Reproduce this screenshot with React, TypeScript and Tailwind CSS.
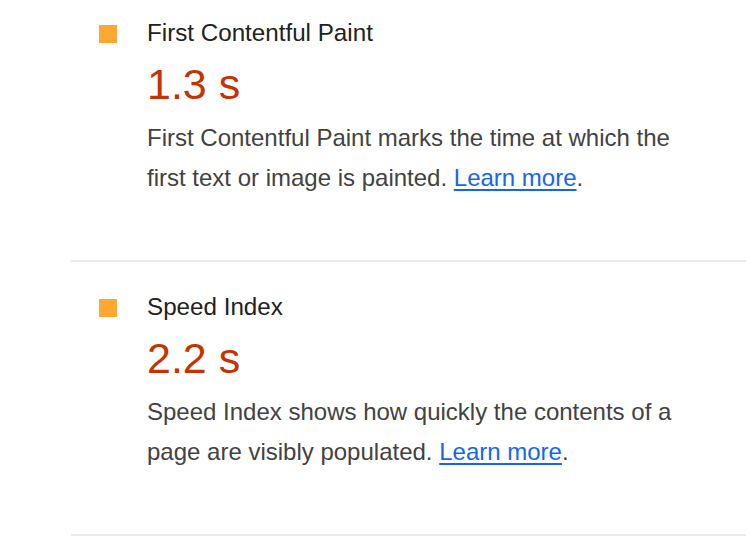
import React from 'react';

interface Metric {
  title: string;
  value: string;
  description: string;
}

const metrics: Metric[] = [
  {
    title: 'First Contentful Paint',
    value: '1.3 s',
    description: 'First Contentful Paint marks the time at which the first text or image is painted.',
  },
  {
    title: 'Speed Index',
    value: '2.2 s',
    description: 'Speed Index shows how quickly the contents of a page are visibly populated.',
  },
];

function MetricRow({ metric, first }: { metric: Metric; first: boolean }) {
  return (
    <div className={`flex border-b-2 border-[#ebebeb] pl-[28px] pb-[62px] ${first ? 'pt-[17px]' : 'pt-[29px]'}`}>
      {/* average score marker */}
      <div className="mt-[8px] h-[18px] w-[18px] shrink-0 bg-[#ffa733]" />
      <div className="ml-[30px] flex flex-col">
        <div className="text-[24.2px] leading-[32px] text-[#212121]">{metric.title}</div>
        <div className="mt-[9px] text-[43px] leading-[52px] text-[#c53300]">{metric.value}</div>
        <p className="mt-[8px] w-[545px] text-[24px] leading-[40px] text-[#424242]">
          {metric.description}{' '}
          <a href="#" className="text-[#1565f5] underline underline-offset-[3px]">
            Learn more
          </a>
          .
        </p>
      </div>
    </div>
  );
}

export default function App() {
  return (
    <div className="h-[538px] w-[746px] overflow-hidden bg-white font-['Liberation_Sans',Arial,sans-serif]">
      <div className="ml-[71px]">
        {metrics.map((m, i) => (
          <MetricRow key={m.title} metric={m} first={i === 0} />
        ))}
      </div>
    </div>
  );
}
